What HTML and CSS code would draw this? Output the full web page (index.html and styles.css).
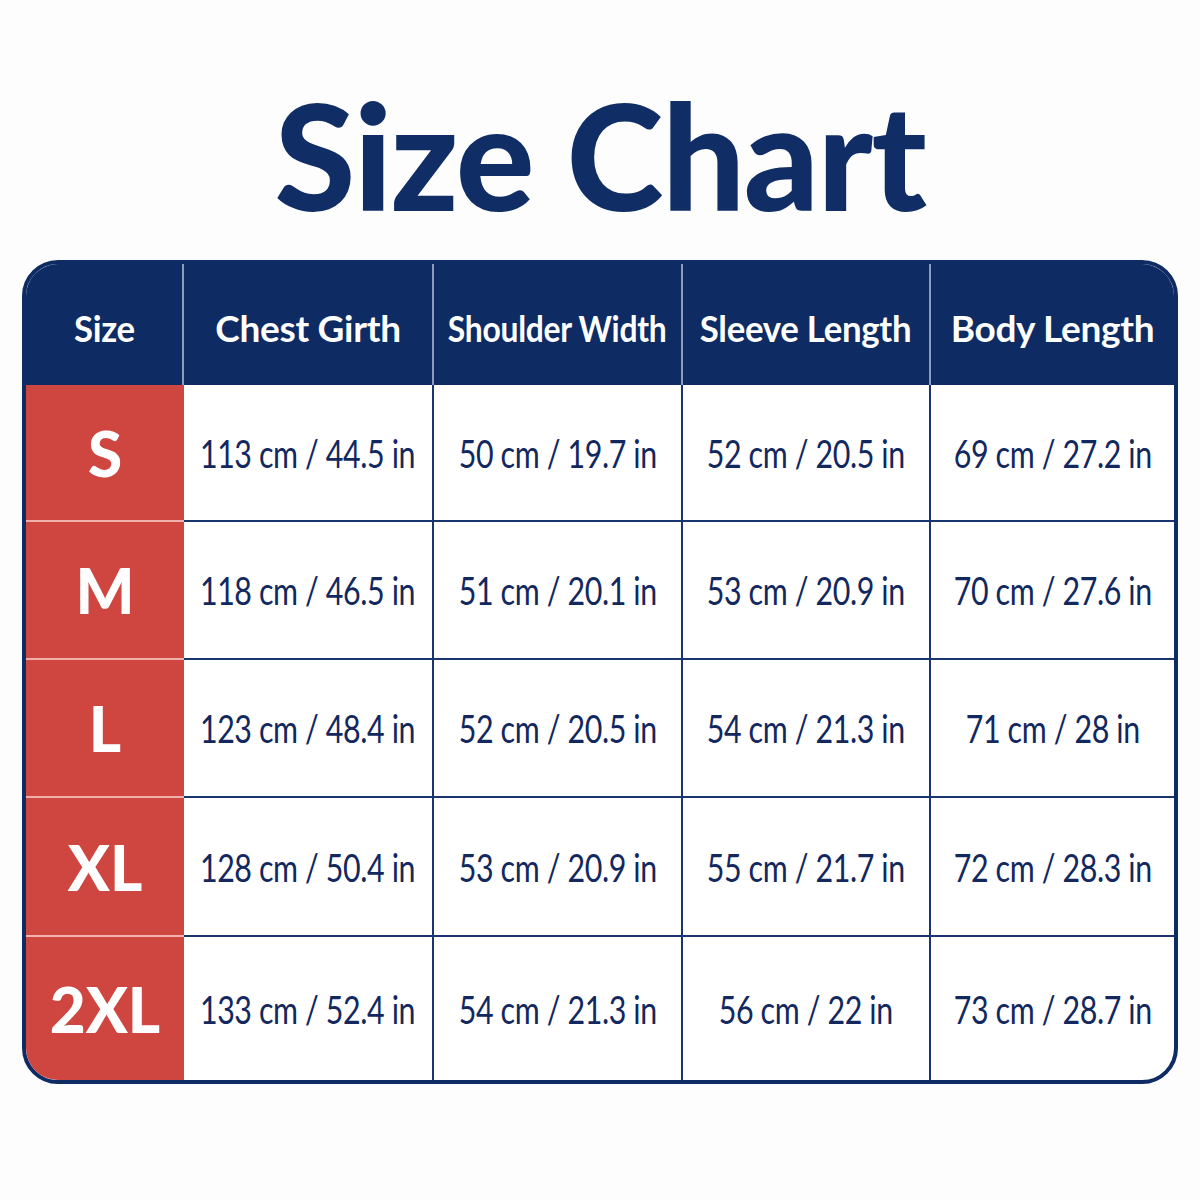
FILE: index.html
```html
<!DOCTYPE html>
<html>
<head>
<meta charset="utf-8">
<link rel="stylesheet" href="styles.css">
</head>
<body>
<div class="page">
  <h1 class="title">Size Chart</h1>
  <div class="chart">
    <div class="cell head first"><span class="ht">Size</span></div>
    <div class="cell head"><span class="ht wide">Chest Girth</span></div>
    <div class="cell head"><span class="ht narrow">Shoulder Width</span></div>
    <div class="cell head"><span class="ht">Sleeve Length</span></div>
    <div class="cell head last"><span class="ht wide">Body Length</span></div>

    <div class="cell size">S</div>
    <div class="cell"><span class="t">113 cm / 44.5 in</span></div>
    <div class="cell"><span class="t">50 cm / 19.7 in</span></div>
    <div class="cell"><span class="t">52 cm / 20.5 in</span></div>
    <div class="cell last"><span class="t">69 cm / 27.2 in</span></div>

    <div class="cell size">M</div>
    <div class="cell"><span class="t">118 cm / 46.5 in</span></div>
    <div class="cell"><span class="t">51 cm / 20.1 in</span></div>
    <div class="cell"><span class="t">53 cm / 20.9 in</span></div>
    <div class="cell last"><span class="t">70 cm / 27.6 in</span></div>

    <div class="cell size">L</div>
    <div class="cell"><span class="t">123 cm / 48.4 in</span></div>
    <div class="cell"><span class="t">52 cm / 20.5 in</span></div>
    <div class="cell"><span class="t">54 cm / 21.3 in</span></div>
    <div class="cell last"><span class="t">71 cm / 28 in</span></div>

    <div class="cell size">XL</div>
    <div class="cell"><span class="t">128 cm / 50.4 in</span></div>
    <div class="cell"><span class="t">53 cm / 20.9 in</span></div>
    <div class="cell"><span class="t">55 cm / 21.7 in</span></div>
    <div class="cell last"><span class="t">72 cm / 28.3 in</span></div>

    <div class="cell size lastrow">2XL</div>
    <div class="cell lastrow"><span class="t">133 cm / 52.4 in</span></div>
    <div class="cell lastrow"><span class="t">54 cm / 21.3 in</span></div>
    <div class="cell lastrow"><span class="t">56 cm / 22 in</span></div>
    <div class="cell last lastrow"><span class="t">73 cm / 28.7 in</span></div>
  </div>
</div>
</body>
</html>
```
FILE: styles.css
```css
html, body {
  margin: 0;
  padding: 0;
  background: #fdfdfd;
}
.page {
  width: 1200px;
  height: 1200px;
  padding: 0 22px;
  box-sizing: border-box;
  font-family: Lato, "Open Sans", sans-serif;
}
.title {
  margin: 0;
  padding-top: 81px;
  height: 260px;
  box-sizing: border-box;
  text-align: center;
  font-size: 147px;
  line-height: 1;
  font-weight: 900;
  color: #102d66;
  letter-spacing: -1.5px;
}
.chart {
  display: grid;
  grid-template-columns: 158px 250px 249px 248px 1fr;
  grid-template-rows: 121px 137px 138px 138px 139px 143px;
  border: 4px solid #0f2b63;
  border-radius: 36px;
  overflow: hidden;
  background: #ffffff;
}
.cell {
  display: flex;
  align-items: center;
  justify-content: center;
  min-width: 0;
  font-size: 38px;
  color: #12285e;
  border-right: 2px solid #1a3470;
  border-bottom: 2px solid #1a3470;
  white-space: nowrap;
}
.t {
  display: inline-block;
  transform: scaleX(0.8);
  letter-spacing: -0.5px;
}
.cell.last { border-right: none; }
.cell.lastrow { border-bottom: none; }
.head {
  background: #0e2b63;
  color: #ffffff;
  font-weight: 700;
  font-size: 37px;
  border-right: 2px solid #8c9bbb;
  border-bottom: none;
  padding-top: 6px;
}
.ht {
  display: inline-block;
  transform: scaleX(0.94);
  letter-spacing: -0.3px;
}
.ht.wide { transform: scaleX(1); }
.ht.narrow { transform: scaleX(0.86); }
.head.last { border-right: none; }
.size {
  background: #cf4641;
  color: #ffffff;
  font-weight: 900;
  font-size: 62px;
  border-right: none;
  border-bottom: 2px solid #f0b0ad;
}
.size.lastrow { border-bottom: none; }
```
